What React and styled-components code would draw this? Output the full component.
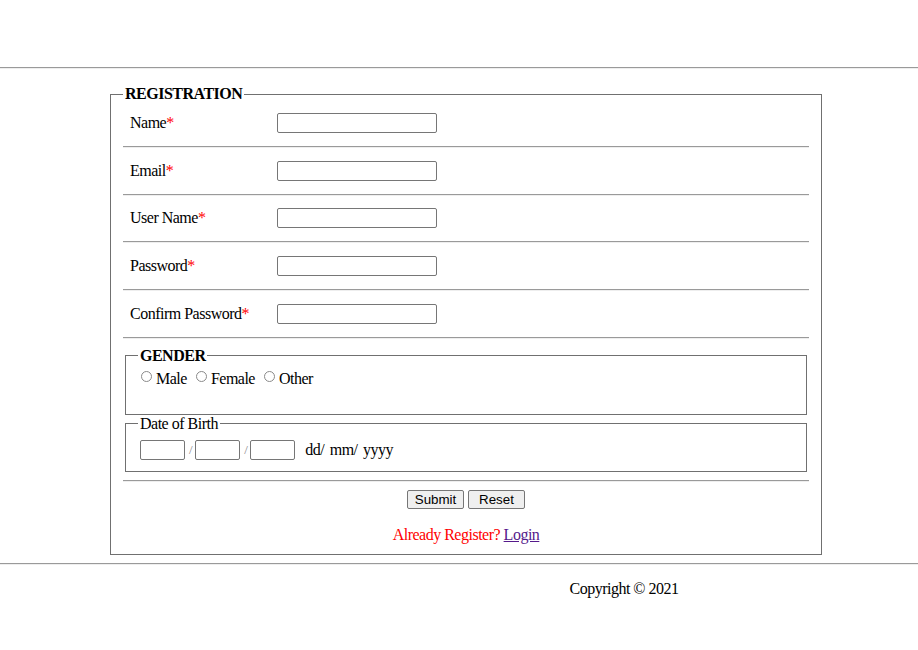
import React from "react";
import styled, { createGlobalStyle } from "styled-components";

const GlobalStyle = createGlobalStyle`
  body {
    margin: 0;
    background: #fff;
    font-family: "Liberation Serif", "Times New Roman", serif;
    font-size: 16px;
    letter-spacing: -0.5px;
    color: #000;
  }
`;

const Rule = styled.hr`
  margin: 8px 0;
  border: 0;
  border-top: 1px solid #9a9a9a;
  border-bottom: 1px solid #eeeeee;
  height: 0;
`;

const Header = styled.div`
  height: 59px;
`;

const Main = styled.div`
  padding: 8px 0 0 110px;
`;

const Box = styled.fieldset`
  width: 686px;
  margin: 0;
  padding: 5px 12px 10px;
  border: 1px solid #707070;
`;

const Inner = styled.fieldset`
  margin: 0 2px;
  padding: 4px 12px 10px;
  border: 1px solid #707070;
  min-height: ${(p) => p.$minH || "auto"};
`;

const Title = styled.legend`
  padding: 0 2px;
  font-weight: ${(p) => (p.$plain ? "normal" : "bold")};
  line-height: 18px;
`;

const Row = styled.div`
  display: grid;
  grid-template-columns: 147px 160px;
  align-items: center;
  height: 29.75px;
  padding-left: 7px;
`;

const Star = styled.span`
  color: red;
`;

const Field = styled.input`
  box-sizing: border-box;
  width: ${(p) => p.$w || "160px"};
  height: 20px;
  margin: 0;
  padding: 1px 2px;
  border: 1px solid #767676;
  border-radius: 2px;
  font: 13px "Liberation Sans", Arial, sans-serif;
`;

const Radios = styled.div`
  display: flex;
  align-items: center;
  line-height: 20px;
`;

const Radio = styled.input`
  appearance: none;
  width: 11px;
  height: 11px;
  margin: 0 4px 4px 3px;
  border: 1px solid #8a8a8a;
  border-radius: 50%;
  background: #fff;
`;

const Choice = styled.label`
  display: inline-flex;
  align-items: center;
  margin-right: 6px;
`;

const DateRow = styled.div`
  display: flex;
  align-items: center;
  padding: 3px 0 1px 2px;
  line-height: 20px;
`;

const Slash = styled.span`
  color: #8a8a8a;
  font-size: 13px;
  margin: 0 3px 0 4px;
`;

const Hint = styled.span`
  margin-left: 10px;
  word-spacing: 2px;
`;

const Actions = styled.div`
  display: flex;
  justify-content: center;
  gap: 4px;
`;

const Button = styled.button`
  box-sizing: border-box;
  width: 57px;
  height: 19px;
  margin: 0;
  padding: 0 6px;
  border: 1px solid #767676;
  border-radius: 2px;
  background: #efefef;
  font: 13.33px "Liberation Sans", Arial, sans-serif;
  letter-spacing: 0;
  color: #000;
`;

const Note = styled.p`
  margin: 17px 0 0;
  text-align: center;
  color: red;
  line-height: 18px;

  a {
    color: #551a8b;
  }
`;

const Footer = styled.div`
  padding: 7px 0 0 330px;
  text-align: center;
`;

const fields = ["Name", "Email", "User Name", "Password", "Confirm Password"];

export default function App() {
  return (
    <>
      <GlobalStyle />
      <Header />
      <Rule />
      <Main>
        <Box>
          <Title>REGISTRATION</Title>
          {fields.map((f, i) => (
            <React.Fragment key={f}>
              {i > 0 && <Rule />}
              <Row>
                <span>
                  {f}
                  <Star>*</Star>
                </span>
                <Field type={f.includes("Password") ? "password" : "text"} />
              </Row>
            </React.Fragment>
          ))}
          <Rule />
          <Inner $minH="52px">
            <Title>GENDER</Title>
            <Radios>
              <Choice>
                <Radio type="radio" name="g" />
                Male
              </Choice>
              <Choice>
                <Radio type="radio" name="g" />
                Female
              </Choice>
              <Choice>
                <Radio type="radio" name="g" />
                Other
              </Choice>
            </Radios>
          </Inner>
          <Inner>
            <Title $plain>Date of Birth</Title>
            <DateRow>
              <Field $w="45px" />
              <Slash>/</Slash>
              <Field $w="45px" />
              <Slash>/</Slash>
              <Field $w="45px" />
              <Hint>dd/ mm/ yyyy</Hint>
            </DateRow>
          </Inner>
          <Rule />
          <Actions>
            <Button type="button">Submit</Button>
            <Button type="reset">Reset</Button>
          </Actions>
          <Note>
            Already Register? <a href="#login">Login</a>
          </Note>
        </Box>
      </Main>
      <Rule />
      <Footer>Copyright © 2021</Footer>
    </>
  );
}
